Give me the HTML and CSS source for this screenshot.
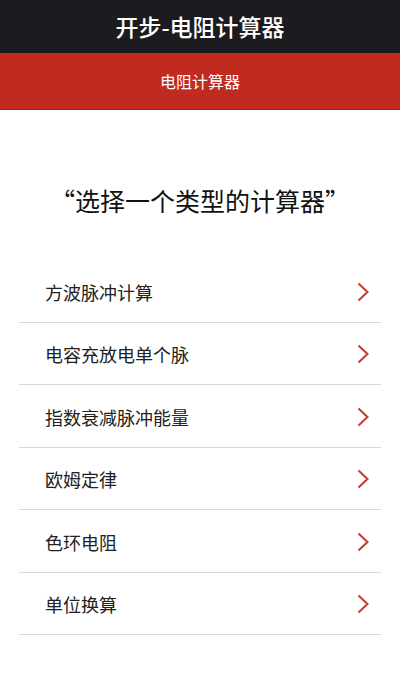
FILE: index.html
```html
<!DOCTYPE html>
<html lang="zh-CN">
<head>
  <meta charset="UTF-8">
  <title>开步-电阻计算器</title>
  <link rel="stylesheet" href="styles.css">
</head>
<body>

  <div class="app-bar">开步-电阻计算器</div>
  <div class="sub-bar">电阻计算器</div>

  <div class="container">
    <h2>“选择一个类型的计算器”</h2>

    <!-- Calculator list -->
    <ul class="menu">
      <li>
        <span>方波脉冲计算</span>
        <svg class="chevron" viewBox="0 0 12 20"><path d="M1.5 1.5 L10.5 10 L1.5 18.5"/></svg>
      </li>
      <li>
        <span>电容充放电单个脉</span>
        <svg class="chevron" viewBox="0 0 12 20"><path d="M1.5 1.5 L10.5 10 L1.5 18.5"/></svg>
      </li>
      <li>
        <span>指数衰减脉冲能量</span>
        <svg class="chevron" viewBox="0 0 12 20"><path d="M1.5 1.5 L10.5 10 L1.5 18.5"/></svg>
      </li>
      <li>
        <span>欧姆定律</span>
        <svg class="chevron" viewBox="0 0 12 20"><path d="M1.5 1.5 L10.5 10 L1.5 18.5"/></svg>
      </li>
      <li>
        <span>色环电阻</span>
        <svg class="chevron" viewBox="0 0 12 20"><path d="M1.5 1.5 L10.5 10 L1.5 18.5"/></svg>
      </li>
      <li>
        <span>单位换算</span>
        <svg class="chevron" viewBox="0 0 12 20"><path d="M1.5 1.5 L10.5 10 L1.5 18.5"/></svg>
      </li>
    </ul>
  </div>

</body>
</html>
```

FILE: styles.css
```css
body {
  margin: 0;
  font-family: "Noto Sans CJK SC", "Noto Sans", sans-serif;
  background-color: #fff;
  color: #222;
}
.app-bar {
  height: 53px;
  line-height: 53px;
  background-color: #1c1c20;
  color: #fff;
  font-size: 23px;
  font-weight: 500;
  text-align: center;
}
.sub-bar {
  height: 56px;
  line-height: 56px;
  background-color: #c12a1f;
  border-bottom: 1px solid #a8241a;
  color: #fff;
  font-size: 16px;
  text-align: center;
}
.container {
  padding: 0 19px;
}
h2 {
  margin: 0;
  padding: 75px 0 45px;
  line-height: 30px;
  font-size: 25px;
  font-weight: normal;
  text-align: center;
  color: #111;
}
.menu {
  list-style: none;
  margin: 0;
  padding: 0;
}
.menu li {
  display: flex;
  align-items: center;
  justify-content: space-between;
  height: 59.5px;
  padding: 2px 12px 0 26px;
  border-bottom: 1px solid #d9d9d9;
  font-size: 18px;
}
.chevron {
  width: 12px;
  height: 20px;
  fill: none;
  stroke: #c8372d;
  stroke-width: 2;
}
```
